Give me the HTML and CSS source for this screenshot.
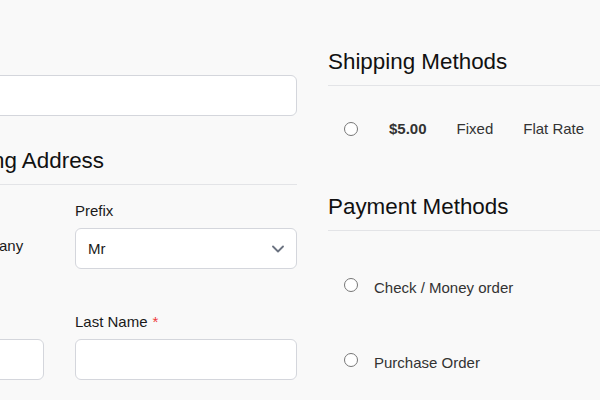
FILE: index.html
```html
<!DOCTYPE html>
<html lang="en">

<head>
    <meta charset="UTF-8" />
    <meta name="viewport" content="width=device-width, initial-scale=1.0" />
    <title>Checkout</title>
    <link rel="stylesheet" href="styles.css">
</head>

<body>
    <div class="checkout">
        <!-- Address column -->
        <div class="address-col">
            <input class="field" type="email" />

            <h2 class="section-title">Enter Shipping Address</h2>

            <div class="address-grid">
                <div class="company">Company</div>
                <div class="form-group">
                    <label class="form-label">Prefix</label>
                    <div class="select-wrap">
                        <select class="field select">
                            <option>Mr</option>
                            <option>Mrs</option>
                            <option>Ms</option>
                        </select>
                        <svg class="chevron" width="12" height="8" viewBox="0 0 12 8">
                            <path d="M1 1.5l5 5 5-5" fill="none" stroke="#6b7280" stroke-width="1.8"
                                stroke-linecap="round" stroke-linejoin="round" />
                        </svg>
                    </div>
                </div>

                <div class="form-group">
                    <label class="form-label required">First Name</label>
                    <input class="field" type="text" />
                </div>
                <div class="form-group">
                    <label class="form-label required">Last Name</label>
                    <input class="field" type="text" />
                </div>
            </div>
        </div>

        <!-- Methods column -->
        <div class="methods-col">
            <h2 class="section-title">Shipping Methods</h2>
            <div class="shipping-row">
                <input type="radio" name="shipping" />
                <span class="price">$5.00</span>
                <span>Fixed</span>
                <span class="carrier">Flat Rate</span>
            </div>

            <h2 class="section-title">Payment Methods</h2>
            <div class="payment-list">
                <label class="payment-option">
                    <input type="radio" name="payment" />
                    <span>Check / Money order</span>
                </label>
                <label class="payment-option">
                    <input type="radio" name="payment" />
                    <span>Purchase Order</span>
                </label>
            </div>
        </div>
    </div>
</body>

</html>
```

FILE: styles.css
```css
body {
    font-family: 'Liberation Sans', Arial, sans-serif;
    background-color: #f9f9f9;
    color: #1f1f1f;
    margin: 0;
    overflow: hidden;
}

.checkout {
    display: flex;
    gap: 31px;
    margin-left: -130px;
}

/* Address column */
.address-col {
    width: 427px;
    flex-shrink: 0;
    padding-top: 75px;
}

.field {
    display: block;
    box-sizing: border-box;
    width: 100%;
    height: 41px;
    border: 1px solid #d4d6dc;
    border-radius: 6px;
    background-color: white;
    padding: 0 12px;
    font-family: inherit;
    font-size: 15px;
    color: #1a1a1a;
    outline: none;
}

.section-title {
    font-size: 22.4px;
    font-weight: normal;
    line-height: 27px;
    color: #111;
    margin: 0;
    padding-bottom: 10px;
    border-bottom: 1px solid #e3e4e7;
}

.address-col .section-title {
    margin-top: 31px;
}

.address-grid {
    display: grid;
    grid-template-columns: 1fr 222px;
    column-gap: 31px;
    row-gap: 43px;
    margin-top: 16px;
}

.company {
    font-size: 15px;
    line-height: 20px;
    padding-top: 35px;
    padding-left: 89px;
    color: #1a1a1a;
}

.form-label {
    display: block;
    font-size: 15px;
    line-height: 20px;
    margin-bottom: 7px;
    color: #1a1a1a;
}

.form-label.required::after {
    content: '*';
    color: #ef3b3b;
    margin-left: 5px;
}

.select-wrap {
    position: relative;
}

.select {
    appearance: none;
    -webkit-appearance: none;
}

.chevron {
    position: absolute;
    right: 13px;
    top: 17px;
    pointer-events: none;
}

/* Methods column */
.methods-col {
    width: 420px;
    flex-shrink: 0;
    padding-top: 48px;
}

.shipping-row {
    display: flex;
    align-items: center;
    gap: 30px;
    padding: 33px 0 33px 16px;
    font-size: 15px;
    line-height: 20px;
    color: #333;
}

.shipping-row input,
.payment-option input {
    width: 14px;
    height: 14px;
    margin: 0;
}

.shipping-row input {
    margin-right: 1px;
}

.price {
    font-weight: bold;
}

.shipping-row + .section-title {
    margin-top: 21px;
}

.payment-list {
    padding-top: 20px;
}

.payment-option {
    display: flex;
    align-items: flex-start;
    gap: 16px;
    padding: 27px 0 28px 16px;
    font-size: 15px;
    line-height: 20px;
    color: #333;
}
```
